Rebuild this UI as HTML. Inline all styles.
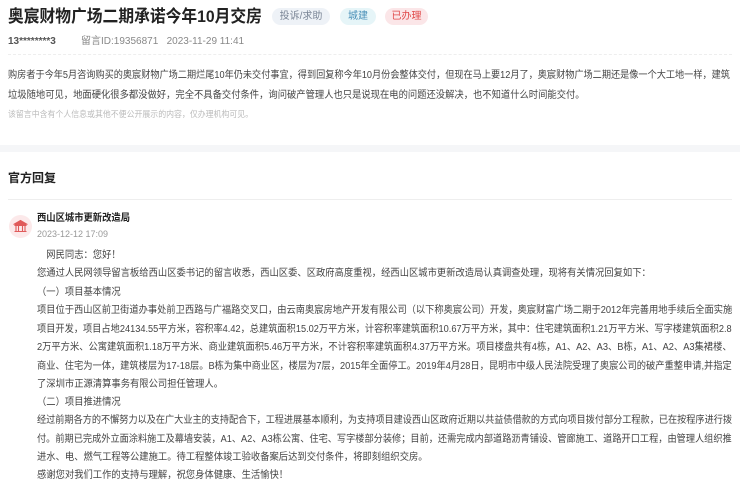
<!DOCTYPE html>
<html><head><meta charset="utf-8"><style>
*{margin:0;padding:0;box-sizing:border-box}
body{width:740px;height:493px;overflow:hidden;background:#fff;font-family:"Liberation Sans","Noto Sans CJK SC",sans-serif;color:#333;position:relative}
.a{position:absolute;white-space:nowrap;transform-origin:0 50%}
.tag{position:absolute;top:8px;height:17px;line-height:17px;border-radius:9px;font-size:10px;text-align:center}
.ln{position:absolute;left:37px;font-size:10px;color:#444;white-space:nowrap;line-height:14px;transform-origin:0 50%;transform:scaleX(0.93)}
</style></head><body>
<div class="a fit" id="ttl" style="left:8px;top:5px;font-size:17px;font-weight:bold;color:#222;line-height:24px" title="254">奥宸财物广场二期承诺今年10月交房</div>
<div class="tag" style="left:272px;width:58px;background:#eef2f7;color:#7a8596">投诉/求助</div>
<div class="tag" style="left:340px;width:36px;background:#e6f5f8;color:#4a90b8">城建</div>
<div class="tag" style="left:385px;width:43px;background:#fbe6e8;color:#e04a4a">已办理</div>
<div class="a" style="left:8px;top:35px;font-size:10px;line-height:14px;color:#666"><b style="color:#555">13********3</b></div>
<div class="a" style="left:81px;top:35px;font-size:10px;line-height:14px;color:#888">留言ID:19356871 &nbsp;&nbsp;2023-11-29 11:41</div>
<div style="position:absolute;left:8px;right:8px;top:54px;border-top:1px dashed #eee"></div>
<div class="a fit" style="left:8px;top:69px;font-size:10px;line-height:14px;color:#444" title="722">购房者于今年5月咨询购买的奥宸财物广场二期烂尾10年仍未交付事宜，得到回复称今年10月份会整体交付，但现在马上要12月了，奥宸财物广场二期还是像一个大工地一样，建筑</div>
<div class="a" style="left:8px;top:89px;font-size:10px;line-height:14px;color:#444;transform:scaleX(0.93)">垃圾随地可见，地面硬化很多都没做好，完全不具备交付条件，询问破产管理人也只是说现在电的问题还没解决，也不知道什么时间能交付。</div>
<div class="a" style="left:8px;top:108px;font-size:8.5px;line-height:12px;color:#bbb;transform:scaleX(0.93)">该留言中含有个人信息或其他不便公开展示的内容，仅办理机构可见。</div>
<div style="position:absolute;left:0;right:0;top:145px;height:7px;background:#f5f6f8"></div>
<div class="a" style="left:8px;top:170px;font-size:12px;font-weight:bold;color:#222;line-height:16px">官方回复</div>
<div style="position:absolute;left:8px;right:8px;top:199px;border-top:1px solid #eee"></div>
<div style="position:absolute;left:9px;top:215px;width:23px;height:23px;border-radius:50%;background:#fce9ea"></div>
<svg style="position:absolute;left:13px;top:219px" width="15" height="15" viewBox="0 0 15 15"><path d="M1.5 5 L7.5 1.5 L13.5 5 Z M2 5.5h11v1H2z M3 7v5 M5.5 7v5 M9.5 7v5 M12 7v5 M1.5 12.5h12" stroke="#e05a5a" stroke-width="1.1" fill="#e05a5a"/></svg>
<div class="a" style="left:37px;top:212px;font-size:10px;font-weight:bold;color:#222;line-height:14px;transform:scaleX(0.93)">西山区城市更新改造局</div>
<div class="a" style="left:37px;top:228px;font-size:9px;color:#999;line-height:12px">2023-12-12 17:09</div>
<div class="ln" style="top:249px">　网民同志：您好！</div>
<div class="ln" style="top:267px">您通过人民网领导留言板给西山区委书记的留言收悉，西山区委、区政府高度重视，经西山区城市更新改造局认真调查处理，现将有关情况回复如下：</div>
<div class="ln" style="top:286px">（一）项目基本情况</div>
<div class="ln fit" title="695" style="top:304px">项目位于西山区前卫街道办事处前卫西路与广福路交叉口，由云南奥宸房地产开发有限公司（以下称奥宸公司）开发，奥宸财富广场二期于2012年完善用地手续后全面实施</div>
<div class="ln fit" title="695" style="top:323px">项目开发，项目占地24134.55平方米，容积率4.42，总建筑面积15.02万平方米，计容积率建筑面积10.67万平方米，其中：住宅建筑面积1.21万平方米、写字楼建筑面积2.8</div>
<div class="ln fit" title="695" style="top:341px">2万平方米、公寓建筑面积1.18万平方米、商业建筑面积5.46万平方米，不计容积率建筑面积4.37万平方米。项目楼盘共有4栋，A1、A2、A3、B栋，A1、A2、A3集裙楼、</div>
<div class="ln fit" title="695" style="top:360px">商业、住宅为一体，建筑楼层为17-18层。B栋为集中商业区，楼层为7层，2015年全面停工。2019年4月28日，昆明市中级人民法院受理了奥宸公司的破产重整申请,并指定</div>
<div class="ln" style="top:378px">了深圳市正源清算事务有限公司担任管理人。</div>
<div class="ln" style="top:396px">（二）项目推进情况</div>
<div class="ln fit" title="695" style="top:414px">经过前期各方的不懈努力以及在广大业主的支持配合下，工程进展基本顺利，为支持项目建设西山区政府近期以共益债借款的方式向项目拨付部分工程款，已在按程序进行拨</div>
<div class="ln fit" title="695" style="top:433px">付。前期已完成外立面涂料施工及幕墙安装，A1、A2、A3栋公寓、住宅、写字楼部分装修；目前，还需完成内部道路沥青铺设、管廊施工、道路开口工程，由管理人组织推</div>
<div class="ln" style="top:451px">进水、电、燃气工程等公建施工。待工程整体竣工验收备案后达到交付条件，将即刻组织交房。</div>
<div class="ln" style="top:469px">感谢您对我们工作的支持与理解，祝您身体健康、生活愉快！</div>
<script>
document.querySelectorAll('.fit').forEach(function(e){var t=+e.getAttribute('title');e.removeAttribute('title');var w=e.scrollWidth;if(w>0)e.style.transform='scaleX('+(t/w)+')';});
</script>
</body></html>
